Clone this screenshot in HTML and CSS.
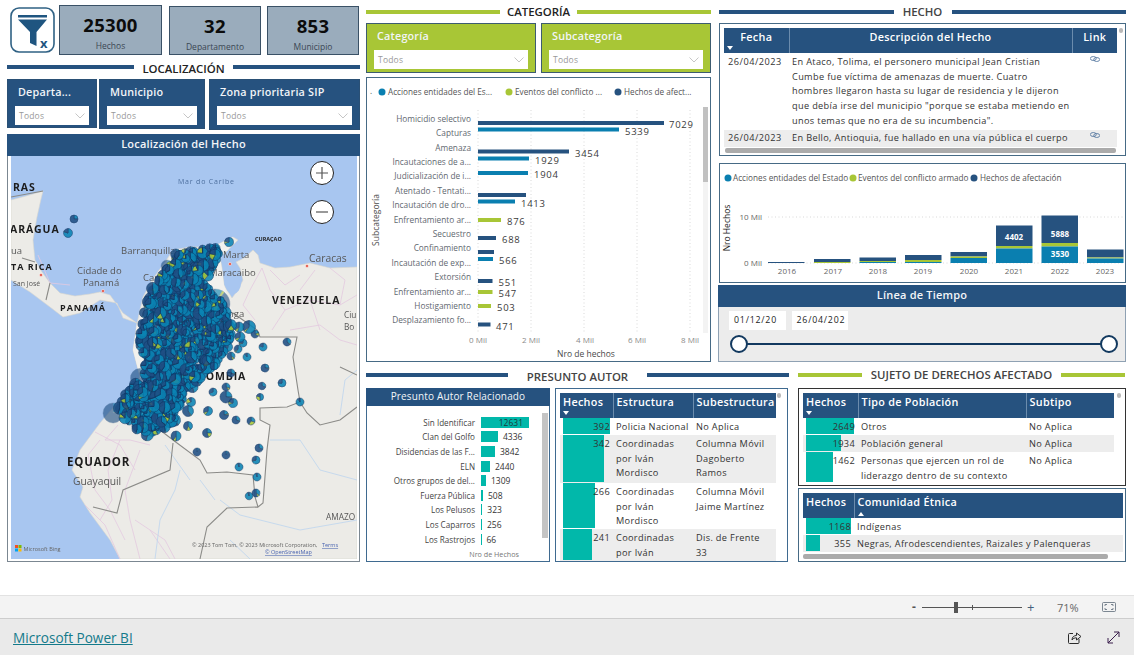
FILE: index.html
```html
<!DOCTYPE html>
<html lang="es">
<head>
<meta charset="utf-8">
<title>Microsoft Power BI</title>
<link rel="stylesheet" href="styles.css">
</head>
<body>
<main class="canvas">
  <section class="col-left">
    <div class="kpis">
      <svg class="clear-filter" viewBox="0 0 45 46" aria-label="Borrar filtros">
        <rect x="1" y="1" width="43" height="44" rx="8" class="cf-frame"/>
        <rect x="8" y="8" width="29" height="2.5" class="cf-fill"/>
        <path d="M8 12.5H37L26.5 25V39L20 36V25Z" class="cf-fill"/>
        <text x="30" y="41" class="cf-x">x</text>
      </svg>
      <div class="kpi kpi-a"><strong>25300</strong><span>Hechos</span></div>
      <div class="kpi kpi-b"><strong>32</strong><span>Departamento</span></div>
      <div class="kpi kpi-c"><strong>853</strong><span>Municipio</span></div>
    </div>
    <div class="section-title title-loc"><i class="bar"></i><h2>LOCALIZACIÓN</h2><i class="bar"></i></div>
    <div class="slicers slicers-loc">
      <div class="slicer s-dep"><h3>Departa...</h3><div class="drop"><span>Todos</span><svg viewBox="0 0 10 6"><path d="M.5.5 5 5 9.500.5"/></svg></div></div>
      <div class="slicer s-mun"><h3>Municipio</h3><div class="drop"><span>Todos</span><svg viewBox="0 0 10 6"><path d="M.5.5 5 5 9.500.5"/></svg></div></div>
      <div class="slicer s-zona"><h3>Zona prioritaria SIP</h3><div class="drop"><span>Todos</span><svg viewBox="0 0 10 6"><path d="M.5.5 5 5 9.500.5"/></svg></div></div>
    </div>
    <div class="map-panel">
      <div class="blue-head">Localización del Hecho</div>
      <svg class="map" id="map" viewBox="11 156 346 403">
        <rect x="11" y="156" width="346" height="403" class="sea"/>
        <path class="land" d="M11 200 26 196 43 191 41 199 37 217 33 240 35 260 42 272 50 283 60 293 75 296 90 294 100 292 110 295 123 313 137 323 143 297 152 280 165 262 173 250 190 247 213 247 226 240 233 237 238 240 228 250 220 257 222 268 224 285 232 298 238 290 243 280 240 268 236 262 244 258 253 250 258 255 260 263 275 268 290 267 310 263 330 268 357 267V559H120L110 540 90 513 80 497 83 487 72 470 80 450 100 423 117 403 140 377 133 350 137 323 123 318 117 303 100 300 80 313 63 317 50 307 30 292 11 280Z"/>
        <ellipse cx="233" cy="283" rx="8" ry="11" class="sea"/>
        <path class="colombia" d="M137 323 173 250 213 247 233 237 228 250 220 257 224 285 233 313 257 330 260 337 297 337 293 357 298 390 300 402 287 407 260 408 260 420 270 425 267 450 263 503 258 507 255 497 253 475 227 472 207 473 200 460 173 440 160 430 140 377 133 350Z"/>
        <g class="roads">
          <path d="M272 330 285 310 310 300 340 305 357 295M300 290 315 270M290 330 320 325 340 340 357 345M310 300 320 330M285 310 270 290 262 268M340 305 345 280 330 268"/>
          <path d="M120 440 108 470 112 500 100 520M140 450 125 490 130 520 140 559M95 432 120 445 135 470M150 530 170 559M38 255 50 283 70 285M100 440 88 455 95 490 110 510 125 540M118 425 105 440 130 440 150 445M85 505 105 525 120 559M135 520 165 540 175 559"/>
          <path d="M262 268 250 290 243 305 255 320M270 270 285 285 300 275"/>
        </g>
        <g class="rivers">
          <path d="M180 470 175 490 160 520 155 559M270 440 300 440 320 470 357 480M220 500 240 515 300 530 357 520M200 480 215 500M340 415 345 380 357 370M165 445 190 480M230 540 250 559"/>
        </g>
        <path class="border" d="M233 313 257 330 260 337 297 337 293 357 298 390 300 402 287 407 260 408 260 420 270 425 267 450 263 503 258 507 255 497 253 475 227 472 207 473 200 460 173 440 160 430M173 443 170 470 123 490 117 513 93 507M258 507 227 508 207 527 200 559M300 402 307 413 320 425 340 420 357 407M340 367 357 375M50 283 46 300M11 197 43 191M22 258 35 262"/>
        <circle cx="41" cy="275" r="1.500" class="city"/>
        <circle cx="103" cy="291" r="1.500" class="city"/>
        <circle cx="307" cy="266" r="1.500" class="city"/>
        <circle cx="230" cy="264" r="1.500" class="city"/>
        <text x="13" y="191" class="lb-c">RAS</text>
        <text x="10" y="233" class="lb-c">ARÁGUA</text>
        <text x="11" y="254" class="lb-m">ua</text>
        <text x="11" y="270" class="lb-b">TA RICA</text>
        <text x="13" y="286" class="lb-s">San José</text>
        <text x="178" y="184" class="lb-sea">Mar do Caribe</text>
        <text x="121" y="254" class="lb-m">Barranquilla</text>
        <text x="77" y="274" class="lb-m">Cidade do</text>
        <text x="83" y="286" class="lb-m">Panamá</text>
        <text x="60" y="311" class="lb-b">PANAMÁ</text>
        <text x="143" y="281" class="lb-m">Cart</text>
        <text x="223" y="258" class="lb-m">Marta</text>
        <text x="209" y="276" class="lb-m">Maracaibo</text>
        <text x="309" y="262" class="lb-l">Caracas</text>
        <text x="255" y="241" class="lb-t">CURAÇAO</text>
        <text x="272" y="304" class="lb-c">VENEZUELA</text>
        <text x="344" y="318" class="lb-a">Ciu</text>
        <text x="344" y="330" class="lb-a">Bo</text>
        <text x="228" y="317" class="lb-m">nga</text>
        <text x="182" y="380" class="lb-c">COLOMBIA</text>
        <text x="67" y="466" class="lb-e">EQUADOR</text>
        <text x="73" y="485" class="lb-l">Guayaquil</text>
        <text x="326" y="520" class="lb-a">AMAZO</text>
        <text x="192" y="547" class="lb-cp">© 2023 Tom Tom, © 2023 Microsoft Corporation,</text>
        <text x="322" y="547" class="lb-lk">Terms</text>
        <text x="265" y="554" class="lb-lk">© OpenStreetMap</text>
        <g>
          <rect x="15" y="545" width="3" height="3" class="ms1"/><rect x="18.500" y="545" width="3" height="3" class="ms2"/>
          <rect x="15" y="548.500" width="3" height="3" class="ms3"/><rect x="18.500" y="548.500" width="3" height="3" class="ms4"/>
        </g>
        <text x="23.500" y="551" class="lb-cp">Microsoft Bing</text>
        <g id="bubbles"></g>
        <circle cx="322" cy="173" r="11.500" class="zoom-btn"/>
        <path d="M316 173H328M322 167V179" class="zoom-glyph"/>
        <circle cx="322" cy="212" r="11.500" class="zoom-btn"/>
        <path d="M316 212H328" class="zoom-glyph"/>
      </svg>
    </div>
  </section>

  <section class="col-main">
    <div class="top-row">
      <div class="col-cat">
        <div class="section-title green title-cat"><i class="bar"></i><h2>CATEGORÍA</h2><i class="bar"></i></div>
        <div class="slicers slicers-cat">
          <div class="slicer green-s"><h3>Categoría</h3><div class="drop"><span>Todos</span><svg viewBox="0 0 10 6"><path d="M.5.5 5 5 9.500.5"/></svg></div></div>
          <div class="slicer green-s"><h3>Subcategoría</h3><div class="drop"><span>Todos</span><svg viewBox="0 0 10 6"><path d="M.5.5 5 5 9.500.5"/></svg></div></div>
        </div>
        <div class="panel chart-panel">
          <svg class="bar-chart" viewBox="367 78 343 283">
            <rect x="703" y="107" width="5" height="226" class="track"/>
            <rect x="703" y="107" width="5" height="75" class="thumb"/>
            <g class="legend">
              <text x="370" y="94">.</text>
              <circle cx="382" cy="92" r="3.500" class="c-blue"/><text x="388" y="95">Acciones entidades del Es...</text>
              <circle cx="509" cy="92" r="3.500" class="c-green"/><text x="515" y="95">Eventos del conflicto ...</text>
              <circle cx="618" cy="92" r="3.500" class="c-dark"/><text x="624" y="95">Hechos de afect...</text>
            </g>
            <g class="grid"><path d="M478 110V333M531 110V333M584 110V333M637 110V333M690 110V333"/></g>
            <g class="cat-labels">
              <text x="471" y="122">Homicidio selectivo</text><text x="471" y="136">Capturas</text>
              <text x="471" y="151">Amenaza</text><text x="471" y="165">Incautaciones de a...</text>
              <text x="471" y="179">Judicialización de i...</text><text x="471" y="194">Atentado - Tentati...</text>
              <text x="471" y="208">Incautación de dro...</text><text x="471" y="223">Enfrentamiento ar...</text>
              <text x="471" y="237">Secuestro</text><text x="471" y="251">Confinamiento</text>
              <text x="471" y="266">Incautación de exp...</text><text x="471" y="280">Extorsión</text>
              <text x="471" y="295">Enfrentamiento ar...</text><text x="471" y="309">Hostigamiento</text>
              <text x="471" y="323">Desplazamiento fo...</text>
            </g>
            <g>
              <rect x="478" y="121" width="186" height="4" class="c-dark"/><rect x="478" y="127.500" width="141" height="4" class="c-blue"/>
              <rect x="478" y="149.500" width="91" height="4" class="c-dark"/><rect x="478" y="156.500" width="51" height="4" class="c-blue"/>
              <rect x="478" y="171" width="50" height="4" class="c-blue"/><rect x="478" y="193" width="48" height="4" class="c-dark"/>
              <rect x="478" y="199.500" width="37" height="4" class="c-blue"/><rect x="478" y="218" width="23" height="4" class="c-green"/>
              <rect x="478" y="236" width="18" height="4" class="c-dark"/><rect x="478" y="250" width="16" height="4" class="c-dark"/>
              <rect x="478" y="257" width="15" height="4" class="c-blue"/><rect x="478" y="279" width="14.500" height="4" class="c-dark"/>
              <rect x="478" y="290" width="14.500" height="4" class="c-green"/><rect x="478" y="304" width="13" height="4" class="c-green"/>
              <rect x="478" y="322.500" width="12.500" height="4" class="c-dark"/>
            </g>
            <g class="vals">
              <text x="669" y="128">7029</text><text x="625" y="135">5339</text><text x="575" y="157">3454</text>
              <text x="535" y="164">1929</text><text x="534" y="178">1904</text><text x="521" y="207">1413</text>
              <text x="507" y="225">876</text><text x="502" y="243">688</text><text x="499" y="264">566</text>
              <text x="498.500" y="286">551</text><text x="498.500" y="297">547</text><text x="497" y="311">503</text>
              <text x="496" y="330">471</text>
            </g>
            <g class="axis">
              <text x="478" y="343">0 Mil</text><text x="531" y="343">2 Mil</text><text x="585" y="343">4 Mil</text>
              <text x="637" y="343">6 Mil</text><text x="690" y="343">8 Mil</text>
            </g>
            <text x="586" y="357" class="ax-title">Nro de hechos</text>
            <text transform="translate(379 220) rotate(-90)" class="ax-title">Subcategoría</text>
          </svg>
        </div>
      </div>

      <div class="col-hecho">
        <div class="section-title title-hecho"><i class="bar"></i><h2>HECHO</h2><i class="bar"></i></div>
        <div class="panel hecho-panel">
          <table class="tbl t-hecho">
            <thead><tr><th class="center">Fecha<i class="sort"></i></th><th class="center">Descripción del Hecho</th><th class="center">Link</th></tr></thead>
            <tbody>
              <tr class="h77"><td>26/04/2023</td><td>En Ataco, Tolima, el personero municipal Jean Cristian<br>Cumbe fue víctima de amenazas de muerte. Cuatro<br>hombres llegaron hasta su lugar de residencia y le dijeron<br>que debía irse del municipio "porque se estaba metiendo en<br>unos temas que no era de su incumbencia".</td><td class="center"><svg class="chain" viewBox="0 0 10 6"><ellipse cx="3.300" cy="2.500" rx="3" ry="2"/><ellipse cx="6.700" cy="3.500" rx="3" ry="2"/></svg></td></tr>
              <tr class="h17 alt"><td>26/04/2023</td><td>En Bello, Antioquia, fue hallado en una vía pública el cuerpo</td><td class="center"><svg class="chain" viewBox="0 0 10 6"><ellipse cx="3.300" cy="2.500" rx="3" ry="2"/><ellipse cx="6.700" cy="3.500" rx="3" ry="2"/></svg></td></tr>
            </tbody>
          </table>
          <i class="v-thumb"></i>
          <i class="h-scroll hs-hecho"></i>
        </div>
        <div class="panel col-chart-panel">
          <svg class="col-chart" viewBox="720 164 405 118">
            <g class="legend">
              <circle cx="728" cy="178" r="3.500" class="c-blue"/><text x="733" y="181">Acciones entidades del Estado</text>
              <circle cx="853" cy="178" r="3.500" class="c-green"/><text x="858" y="181">Eventos del conflicto armado</text>
              <circle cx="974" cy="178" r="3.500" class="c-dark"/><text x="980" y="181">Hechos de afectación</text>
            </g>
            <g class="grid"><path d="M768 217H1125M768 263H1125"/></g>
            <g class="axis end"><text x="762" y="220">10 Mil</text><text x="762" y="266">0 Mil</text></g>
            <text transform="translate(730 228) rotate(-90)" class="ax-title ax-dark">Nro Hechos</text>
            <g>
              <rect x="768" y="262" width="36.500" height="1" class="c-dark"/>
              <rect x="814" y="259" width="36.500" height="3" class="c-dark"/><rect x="814" y="262" width="36.500" height="1" class="c-green"/>
              <rect x="859.500" y="257.500" width="36.500" height="3.500" class="c-dark"/><rect x="859.500" y="261" width="36.500" height="1" class="c-green"/><rect x="859.500" y="262" width="36.500" height="1" class="c-blue"/>
              <rect x="905" y="255" width="36.500" height="5" class="c-dark"/><rect x="905" y="260" width="36.500" height="2" class="c-green"/><rect x="905" y="262" width="36.500" height="1" class="c-blue"/>
              <rect x="950.500" y="252" width="36.500" height="4.500" class="c-dark"/><rect x="950.500" y="256.500" width="36.500" height="1.500" class="c-green"/><rect x="950.500" y="258" width="36.500" height="5" class="c-blue"/>
              <rect x="996" y="225.500" width="36.500" height="20.500" class="c-dark"/><rect x="996" y="246" width="36.500" height="2.500" class="c-green"/><rect x="996" y="248.500" width="36.500" height="14.500" class="c-blue"/>
              <rect x="1041.500" y="215.500" width="36.500" height="27.500" class="c-dark"/><rect x="1041.500" y="243" width="36.500" height="3.500" class="c-green"/><rect x="1041.500" y="246.500" width="36.500" height="16.500" class="c-blue"/>
              <rect x="1087" y="249.500" width="36.500" height="8" class="c-dark"/><rect x="1087" y="257.500" width="36.500" height="1" class="c-green"/><rect x="1087" y="258.500" width="36.500" height="4.500" class="c-blue"/>
            </g>
            <g class="col-vals"><text x="1014" y="240">4402</text><text x="1060" y="237">5888</text><text x="1060" y="257">3530</text></g>
            <g class="axis">
              <text x="787" y="274">2016</text><text x="833" y="274">2017</text><text x="878" y="274">2018</text><text x="923" y="274">2019</text>
              <text x="969" y="274">2020</text><text x="1014" y="274">2021</text><text x="1060" y="274">2022</text><text x="1105" y="274">2023</text>
            </g>
          </svg>
        </div>
        <div class="timeline">
          <div class="blue-head tl-head">Línea de Tiempo</div>
          <div class="tl-body">
            <div class="dates"><span class="date">01/12/20</span><span class="date">26/04/202</span></div>
            <div class="track-line"><i class="knob"></i><i class="knob"></i></div>
          </div>
        </div>
      </div>
    </div>

    <div class="bottom-row">
      <div class="col-autor">
        <div class="section-title title-autor"><i class="bar"></i><h2>PRESUNTO AUTOR</h2><i class="bar"></i></div>
        <div class="autor-panels">
          <div class="panel autor-chart">
            <div class="blue-head autor-head">Presunto Autor Relacionado</div>
            <div class="autor-rows">
              <div class="arow"><span class="alabel">Sin Identificar</span><span class="abar" style="width:48px"><b class="inside">12631</b></span></div>
              <div class="arow"><span class="alabel">Clan del Golfo</span><span class="abar" style="width:17px"></span><b>4336</b></div>
              <div class="arow"><span class="alabel">Disidencias de las F...</span><span class="abar" style="width:14px"></span><b>3842</b></div>
              <div class="arow"><span class="alabel">ELN</span><span class="abar" style="width:9px"></span><b>2440</b></div>
              <div class="arow"><span class="alabel">Otros grupos de del...</span><span class="abar" style="width:5px"></span><b>1309</b></div>
              <div class="arow"><span class="alabel">Fuerza Pública</span><span class="abar" style="width:2px"></span><b>508</b></div>
              <div class="arow"><span class="alabel">Los Pelusos</span><span class="abar" style="width:1.300px"></span><b>323</b></div>
              <div class="arow"><span class="alabel">Los Caparros</span><span class="abar" style="width:1px"></span><b>256</b></div>
              <div class="arow"><span class="alabel">Los Rastrojos</span><span class="abar" style="width:.5px"></span><b>66</b></div>
            </div>
            <div class="autor-axis">Nro de Hechos</div>
            <i class="a-scroll"></i>
          </div>
          <div class="panel autor-table">
            <table class="tbl t-autor">
              <thead><tr><th>Hechos<i class="sort"></i></th><th>Estructura</th><th>Subestructura</th></tr></thead>
              <tbody>
                <tr class="h17"><td class="num"><i class="dbar" style="width:47px"></i><b>392</b></td><td>Policia Nacional</td><td>No Aplica</td></tr>
                <tr class="h48 alt"><td class="num"><i class="dbar" style="width:41px"></i><b>342</b></td><td>Coordinadas<br>por Iván<br>Mordisco</td><td>Columna Móvil<br>Dagoberto<br>Ramos</td></tr>
                <tr class="h46"><td class="num"><i class="dbar" style="width:32px"></i><b>266</b></td><td>Coordinadas<br>por Iván<br>Mordisco</td><td>Columna Móvil<br>Jaime Martínez</td></tr>
                <tr class="h30 alt"><td class="num"><i class="dbar" style="width:29px"></i><b>241</b></td><td>Coordinadas<br>por Iván</td><td>Dis. de Frente<br>33</td></tr>
              </tbody>
            </table>
            <i class="v-thumb"></i>
          </div>
        </div>
      </div>
      <div class="col-sujeto">
        <div class="section-title green title-sujeto"><i class="bar"></i><h2>SUJETO DE DERECHOS AFECTADO</h2><i class="bar"></i></div>
        <div class="panel sujeto1">
          <table class="tbl t-suj1">
            <thead><tr><th>Hechos<i class="sort"></i></th><th>Tipo de Población</th><th>Subtipo</th></tr></thead>
            <tbody>
              <tr class="h17"><td class="num"><i class="dbar" style="width:48px"></i><b>2649</b></td><td>Otros</td><td>No Aplica</td></tr>
              <tr class="h17 alt"><td class="num"><i class="dbar" style="width:35px"></i><b>1934</b></td><td>Población general</td><td>No Aplica</td></tr>
              <tr class="h30"><td class="num"><i class="dbar" style="width:27px"></i><b>1462</b></td><td>Personas que ejercen un rol de<br>liderazgo dentro de su contexto</td><td>No Aplica</td></tr>
            </tbody>
          </table>
          <i class="v-thumb"></i>
        </div>
        <div class="panel sujeto2">
          <table class="tbl t-suj2">
            <thead><tr><th>Hechos</th><th>Comunidad Étnica<i class="sort up"></i></th></tr></thead>
            <tbody>
              <tr class="h17"><td class="num"><i class="dbar" style="width:45px"></i><b>1168</b></td><td>Indígenas</td></tr>
              <tr class="h17 alt"><td class="num"><i class="dbar" style="width:14px"></i><b>355</b></td><td>Negras, Afrodescendientes, Raizales y Palenqueras</td></tr>
            </tbody>
          </table>
          <i class="h-scroll hs-suj"></i>
        </div>
      </div>
    </div>
  </section>
</main>

<div class="zoombar">
  <span class="zb-minus">-</span>
  <div class="zb-slider"><i class="zb-thumb"></i><i class="zb-tick"></i></div>
  <span class="zb-plus">+</span>
  <span class="zb-pct">71%</span>
  <svg class="zb-fit" viewBox="0 0 14 10"><rect x=".5" y=".5" width="13" height="9" rx="1"/><path d="M3 4V2.500H5M9 2.500H11V4M11 6V7.500H9M5 7.500H3V6"/></svg>
</div>
<footer class="footer">
  <a class="pbi-link" href="#">Microsoft Power BI</a>
  <svg class="f-icon share" viewBox="0 0 14 13"><path d="M5 2.500H1.500Q.5 2.500.5 3.500V11.500Q.5 12.500 1.500 12.500H10Q11 12.500 11 11.500V8"/><path d="M4 9C4 6 6 4.500 8.500 4.500V2L13 5.500 8.500 9V6.800C6.500 6.800 5 7.500 4 9Z"/></svg>
  <svg class="f-icon expand" viewBox="0 0 13 13"><path d="M1 12 12 1M7 1H12V6M1 7V12H6"/></svg>
</footer>
<script src="script.js"></script>
</body>
</html>
```
FILE: styles.css
```css
* { box-sizing: border-box; }
html, body { margin: 0; padding: 0; }
body {
  width: 1134px; height: 655px; overflow: hidden; background: #fff;
  display: flex; flex-direction: column;
  font-family: "Open Sans", "Noto Sans", sans-serif; color: #333;
}
i { display: block; font-style: normal; }
h2, h3 { margin: 0; font-weight: 400; }

.canvas { height: 595px; display: flex; gap: 6px; padding-left: 7px; flex: none; }
.col-left { width: 353px; flex: none; }
.col-main { width: 760px; flex: none; display: flex; flex-direction: column; }

/* KPIs */
.kpis { display: flex; align-items: flex-start; height: 56px; padding-top: 5px; }
.clear-filter { width: 45px; height: 46px; margin: 2px 4px 0 3px; flex: none; }
.cf-frame { fill: #fff; stroke: #2f6184; stroke-width: 1.6; }
.cf-fill { fill: #1f5580; }
.cf-x { font: 700 13px "Open Sans", sans-serif; fill: #1f5580; }
.kpi {
  background: #9aacbc; border: 1px solid #3a5166; height: 50px;
  display: flex; flex-direction: column; align-items: center; text-align: center;
}
.kpi strong { font-size: 18.500px; line-height: 22px; margin-top: 8px; font-weight: 700; color: #0c0c0c; letter-spacing: .3px; }
.kpi span { font-size: 8.500px; line-height: 12px; margin-top: 4px; color: #3b4754; }
.kpi-a { width: 103px; }
.kpi-b { width: 92px; margin: 1px 6px 0 7px; height: 49px; }
.kpi-c { width: 92px; margin-top: 1px; height: 49px; }

/* Section titles */
.section-title { display: flex; align-items: center; gap: 0; }
.section-title h2 { font-size: 11.400px; line-height: 14px; color: #222; text-align: center; font-weight: 600; white-space: nowrap; }
.section-title .bar { height: 4px; background: #26527f; flex: 1 1 0; }
.section-title.green .bar { background: #a8c636; }
.title-loc { height: 23px; padding-bottom: 2px; }
.title-loc h2 { width: 99px; padding-top: 5px; }
.title-cat { height: 23px; }
.title-cat .bar:first-child { margin-top: 1px; }
.title-cat h2 { width: 77px; }
.title-hecho { height: 23px; }
.title-hecho h2 { width: 58px; color: #444; }
.title-autor { height: 21px; padding-bottom: 6px; }
.title-autor h2 { width: 139px; color: #444; padding-top: 4px; }
.title-sujeto { height: 21px; padding: 0 1px 6px 0; }
.title-sujeto h2 { width: 199px; color: #444; }

/* Slicers */
.slicers { display: flex; }
.slicers-loc { gap: 2px; height: 55px; align-items: flex-start; }
.slicers-cat { gap: 5px; height: 54px; }
.slicer {
  background: #26527f; border: 1px solid #2a5075; padding: 0 7px;
  display: flex; flex-direction: column; color: #fff;
}
.slicer h3 { font-size: 10.800px; line-height: 14px; font-weight: 600; margin: 5px 3px 7px; color: #f2f5f8; letter-spacing: .2px; white-space: nowrap; }
.drop {
  height: 19px; background: #fff; display: flex; align-items: center; justify-content: space-between;
  padding: 0 4px 0 4px; font-size: 8.500px; color: #999; letter-spacing: .2px;
}
.drop svg { width: 10px; height: 6px; fill: none; stroke: #b8b8b8; stroke-width: .8; }
.s-dep { width: 90px; height: 49px; }
.s-mun { width: 106px; height: 50px; margin-right: 2px; }
.s-zona { width: 151px; height: 51px; }
.green-s { width: 170px; height: 50px; background: #a8c636; border-color: #3d5c70; }

/* Map */
.map-panel { height: 428px; border: 1px solid #7b8791; border-top: 0; padding: 0; }
.blue-head { background: #26527f; color: #f2f5f8; text-align: center; font-size: 11px; font-weight: 600; letter-spacing: .2px; }
.map-panel .blue-head { height: 22px; line-height: 19px; margin: 0 -1px; }
.map { display: block; width: 346px; height: 403px; margin-left: 3px; filter: blur(.25px); }
.sea { fill: #a8c6f0; }
.land { fill: #ecebe7; stroke: #d9d6cf; stroke-width: .6; }
.colombia { fill: #f2f1ee; }
.roads path { fill: none; stroke: #e3c9e0; stroke-width: .8; }
.rivers path { fill: none; stroke: #bdd4ef; stroke-width: .8; }
.border { fill: none; stroke: #8b8b88; stroke-width: 1.100; }
.city { fill: #e34a3c; stroke: #fff; stroke-width: .5; }
.map text { font-family: "Open Sans", sans-serif; }
.lb-c { font-size: 10.500px; font-weight: 700; fill: #1d1d1d; letter-spacing: .9px; }
.lb-b { font-size: 9px; font-weight: 700; fill: #1d1d1d; letter-spacing: 1px; }
.lb-e { font-size: 11.500px; font-weight: 700; fill: #1d1d1d; letter-spacing: .8px; }
.lb-m { font-size: 9.500px; fill: #575757; }
.lb-a { font-size: 8.300px; fill: #575757; }
.lb-l { font-size: 10.300px; fill: #575757; }
.lb-s { font-size: 7px; fill: #555; }
.lb-t { font-size: 5.500px; font-weight: 700; fill: #222; }
.lb-sea { font-size: 7px; fill: #4d6f9e; letter-spacing: .8px; }
.lb-cp { font-size: 5.500px; fill: #666; }
.lb-lk { font-size: 5.500px; fill: #4a64b0; text-decoration: underline; }
.ms1 { fill: #f25022; } .ms2 { fill: #7fba00; } .ms3 { fill: #00a4ef; } .ms4 { fill: #ffb900; }
.zoom-btn { fill: #fff; stroke: #222; stroke-width: 1; }
.zoom-glyph { fill: none; stroke: #555; stroke-width: 1.200; }
.p-blue { fill: #0a84b4; }
.p-dark { fill: #1f4f84; }
.p-green { fill: #a8c636; }
.bub { stroke: #0c3160; stroke-width: .55; opacity: .88; }
.bub-pale { opacity: .62; stroke: #3a5f8a; stroke-width: .4; }

/* Panels */
.panel { border: 1px solid #466a85; background: #fff; }
.chart-panel { height: 285px; }
.bar-chart { display: block; width: 343px; height: 283px; }
.c-blue { fill: #0a7fb0; } .c-green { fill: #a8c636; } .c-dark { fill: #26527f; }
.legend text { font-size: 8.200px; fill: #555; }
.grid path { fill: none; stroke: #cfcfcf; stroke-width: .8; stroke-dasharray: 1 2.500; }
.track { fill: #f3f3f3; } .thumb { fill: #c1c1c1; }
.cat-labels text { font-size: 8.300px; fill: #5f6870; text-anchor: end; }
.vals text { font-size: 9.500px; fill: #3a3a3a; letter-spacing: .7px; }
.axis text { font-size: 8px; fill: #8a8a8a; text-anchor: middle; }
.col-chart .axis text { fill: #666; }
.axis.end text { text-anchor: end; }
.ax-title { font-size: 8.500px; fill: #4a4a4a; text-anchor: middle; }
.ax-dark { fill: #222; }
.col-vals text { font-size: 8px; font-weight: 700; fill: #fff; text-anchor: middle; }

.top-row { display: flex; gap: 8px; height: 367px; flex: none; }
.col-cat { width: 345px; flex: none; }
.col-hecho { width: 407px; flex: none; }

/* Tables */
.tbl { border-collapse: collapse; table-layout: fixed; font-size: 9.200px; line-height: 14.700px; color: #333; letter-spacing: .34px; }
.tbl th {
  background: #26527f; color: #fff; font-weight: 600; font-size: 10.800px; height: 25px; padding: 0 3px;
  text-align: left; vertical-align: top; line-height: 18px; border-right: 1px solid #6b8cad; position: relative; letter-spacing: .3px; overflow: hidden;
}
.tbl th:last-child { border-right: 0; }
.tbl th.center { text-align: center; }
.tbl td { padding: 2px 3px 0; vertical-align: top; white-space: nowrap; overflow: hidden; }
.tbl td.center { text-align: center; }
.sort { width: 0; height: 0; border: 3.500px solid transparent; border-top: 4px solid #fff; border-bottom: 0; margin: 0; }
.sort.up { border-top: 0; border-bottom: 4px solid #fff; margin-top: 1px; }
.alt td { background: #ededed; }
.h17 td { height: 17px; } .h77 td { height: 77px; } .h48 td { height: 48px; } .h46 td { height: 46px; } .h30 td { height: 30px; }
.num { position: relative; text-align: right; }
.num b { font-weight: 400; position: relative; }
.dbar { position: absolute; left: 3px; top: 0; bottom: 1px; background: #01b8aa; }
.chain { width: 10px; height: 6px; fill: none; stroke: #4a6e99; stroke-width: .8; vertical-align: 3px; }
.v-thumb { position: absolute; width: 3.500px; height: 5px; background: #b9b9b9; border-radius: 2px; }
.h-scroll { height: 4.500px; background: #ababab; border-radius: 2px; position: absolute; }

.hecho-panel { position: relative; height: 133px; padding: 4px 0 0 4px; }
.t-hecho { width: 393px; }
.t-hecho th:nth-child(1) { width: 65px; } .t-hecho th:nth-child(2) { width: 283px; }
.t-hecho th:nth-child(3) { width: 45px; }
.t-hecho td:first-child { padding-left: 4px; letter-spacing: .5px; }
.t-hecho tr.h17 td { padding-top: 1px; }
.hecho-panel .v-thumb { left: 399px; top: 4px; }
.hs-hecho { left: 5px; width: 391px; top: 124px; }

.col-chart-panel { height: 120px; margin-top: 7px; }
.col-chart { display: block; width: 405px; height: 118px; }

.timeline { margin: 2px 0 0 -1px; width: 408px; height: 77px; background: #ececec; border: 1px solid #8fa1b3; border-top: 0; }
.tl-head { height: 22px; line-height: 19px; margin: 0 -1px; }
.tl-body { padding: 4px 10px 0; }
.dates { display: flex; gap: 6px; }
.date { display: block; width: 56.500px; height: 19px; background: #fff; font-size: 8.800px; line-height: 19px; padding-left: 5px; letter-spacing: .8px; overflow: hidden; white-space: nowrap; color: #222; }
.track-line { height: 2px; background: #12395f; margin: 13px 6px 0 10px; display: flex; justify-content: space-between; align-items: center; }
.knob { width: 18px; height: 18px; border-radius: 50%; background: #fff; border: 2px solid #12395f; margin: 0 -9px; flex: none; }

.bottom-row { display: flex; gap: 9px; }
.col-autor { width: 423px; flex: none; }
.col-sujeto { width: 328px; flex: none; }
.autor-panels { display: flex; gap: 5px; }
.autor-chart { width: 184px; height: 174px; position: relative; border-color: #3f6a90; }
.autor-head { height: 18px; line-height: 17px; margin: -1px -1px 0; font-size: 10px; font-weight: 500; letter-spacing: .15px; }
.autor-rows { padding-top: 9px; }
.arow { height: 14.600px; display: flex; align-items: center; font-size: 8.100px; color: #444; }
.alabel { width: 108px; text-align: right; flex: none; margin-right: 6px; white-space: nowrap; }
.abar { height: 11px; background: #01b8aa; display: block; flex: none; position: relative; }
.arow b { font-weight: 400; margin-left: 5px; color: #333; font-size: 8.500px; }
.abar .inside { position: absolute; right: 6px; top: -1px; margin: 0; line-height: 13px; color: #1c3a3a; }
.autor-axis { font-size: 7.200px; color: #777; text-align: right; padding: 3px 30px 0 0; line-height: 10px; }
.a-scroll { position: absolute; left: 175px; top: 24px; width: 6px; height: 125px; background: #c4c4c4; }

.autor-table { width: 233px; height: 174px; position: relative; padding: 4px 0 0 4px; overflow: hidden; border-color: #3f6a90; }
.t-autor { width: 216px; }
.t-autor th:nth-child(1) { width: 53px; } .t-autor th:nth-child(2) { width: 80px; } .t-autor th:nth-child(3) { width: 83px; }
.autor-table .v-thumb { left: 221px; top: 4px; }
.tbl .num { padding-right: 3px; }

.sujeto1 { height: 98px; position: relative; padding: 4px 0 0 4px; border-color: #333; margin-bottom: 2px; overflow: hidden; }
.t-suj1 { width: 311px; }
.t-suj1 th:nth-child(1) { width: 55px; } .t-suj1 th:nth-child(2) { width: 168px; } .t-suj1 th:nth-child(3) { width: 88px; }
.sujeto1 .v-thumb { left: 318px; top: 4px; }
.sujeto2 { height: 74px; position: relative; padding: 4px 0 0 4px; overflow: hidden; }
.t-suj2 { width: 320px; }
.t-suj2 th:nth-child(1) { width: 51px; } .t-suj2 th:nth-child(2) { width: 269px; }
.hs-suj { left: 4px; width: 305px; top: 65px; }

/* Zoom bar */
.zoombar { height: 23px; flex: none; background: #f3f3f3; border-top: 1px solid #e2e2e2; position: relative; display: flex; align-items: center; padding-left: 912px; color: #555; }
.zb-minus { width: 10px; font-size: 12px; font-weight: 700; line-height: 20px; }
.zb-slider { width: 100px; height: 1px; background: #555; position: relative; flex: none; }
.zb-thumb { position: absolute; left: 32px; top: -5px; width: 4px; height: 11px; background: #555; }
.zb-tick { position: absolute; left: 50px; top: -2px; width: 1px; height: 5px; background: #555; }
.zb-plus { margin-left: 5px; width: 14px; font-size: 13px; color: #44607a; }
.zb-pct { margin-left: 16px; width: 45px; font-size: 11px; color: #666; }
.zb-fit { width: 14px; height: 10px; fill: none; stroke: #5d6b78; stroke-width: .8; flex: none; }

/* Footer */
.footer { flex: 1; background: #eaeaea; border-top: 1px solid #cdcdcd; display: flex; align-items: center; padding: 1px 14px 0 13px; }
.pbi-link { font-size: 13.600px; color: #147a8a; text-decoration: underline; font-family: "Open Sans", sans-serif; }
.f-icon { fill: none; stroke: #2a2a2a; stroke-width: 1; flex: none; }
.share { width: 14px; height: 13px; margin-left: auto; }
.expand { width: 13px; height: 13px; margin-left: 25px; stroke: #3a1f4d; }
```
FILE: script.js
```js
(function () {
  var NS = "http://www.w3.org/2000/svg";
  var host = document.getElementById("bubbles");
  var seed = 20230426;
  function rnd() { seed = (seed * 1664525 + 1013904223) % 4294967296; return seed / 4294967296; }

  function slice(g, x, y, r, a0, a1, cls) {
    var large = a1 - a0 > Math.PI ? 1 : 0;
    var p = document.createElementNS(NS, "path");
    p.setAttribute("d", "M" + x + " " + y + "L" + (x + r * Math.cos(a0)).toFixed(2) + " " + (y + r * Math.sin(a0)).toFixed(2) +
      "A" + r + " " + r + " 0 " + large + " 1 " + (x + r * Math.cos(a1)).toFixed(2) + " " + (y + r * Math.sin(a1)).toFixed(2) + "Z");
    p.setAttribute("class", cls);
    g.appendChild(p);
  }

  function pie(x, y, r, blue, green, pale) {
    var g = document.createElementNS(NS, "g");
    g.setAttribute("class", "bub" + (pale ? " bub-pale" : ""));
    var start = -Math.PI / 2, tau = Math.PI * 2;
    var a1 = start + blue * tau, a2 = a1 + green * tau;
    if (blue > 0) slice(g, x, y, r, start, a1 - 0.0001, "p-blue");
    if (green > 0) slice(g, x, y, r, a1, a2, "p-green");
    slice(g, x, y, r, a2, start + tau - 0.0001, "p-dark");
    host.appendChild(g);
  }

  // dense cluster outline, page coordinates
  var poly = [[176,252],[222,247],[205,285],[222,300],[228,320],[232,340],[226,352],[208,370],[195,385],[185,392],[176,420],[160,432],[148,437],[130,425],[118,410],[122,396],[142,378],[146,360],[140,345],[142,320],[150,290],[165,272]];
  function inside(px, py) {
    var c = false;
    for (var i = 0, j = poly.length - 1; i < poly.length; j = i++) {
      var a = poly[i], b = poly[j];
      if ((a[1] > py) !== (b[1] > py) && px < (b[0] - a[0]) * (py - a[1]) / (b[1] - a[1]) + a[0]) c = !c;
    }
    return c;
  }

  pie(215, 304, 15, .08, .03, true);
  pie(140, 378, 9.500, .15, .02, true);
  pie(113, 413, 10, .2, .04, true);
  pie(167, 266, 6, .5, 0, true);
  pie(178, 259, 6, .55, 0, true);
  pie(196, 258, 6, .5, .05, true);

  var n = 0;
  while (n < 1000) {
    var x = 118 + rnd() * 116, y = 246 + rnd() * 194;
    if (!inside(x, y)) continue;
    var r = 3 + rnd() * 3.200;
    var b = .35 + rnd() * .45, gr = rnd() < .22 ? .1 + rnd() * .2 : .01;
    pie(+x.toFixed(1), +y.toFixed(1), +r.toFixed(1), b, gr, false);
    n++;
  }

  var loose = [
    [74,219,4,.25,0],[68,233,4.500,.8,.02],[229,242,4.500,.7,.08],
    [255,334,4,.2,.15],[263,347,4,.8,0],[287,342,4,.35,.03],[247,357,4,.9,0],[265,368,4,.25,.04],
    [262,386,3.800,.3,0],[282,383,4,.75,.02],[260,397,3.600,.5,.3],[300,402,4,.9,0],[226,387,4,.3,.1],
    [226,397,6,.25,.03],[233,403,4.500,.7,.1],[213,392,4,.7,0],[191,402,4.500,.7,.2],[188,411,5.500,.4,.03],
    [208,411,4.500,.6,.1],[224,415,4.500,.2,.05],[236,420,4,.3,.02],[251,421,4,.3,.3],[188,426,4.500,.4,.15],
    [207,433,4.500,.25,.2],[176,436,5,.5,.1],[197,452,4,.1,0],[226,455,4,.1,0],[259,448,4,.3,0],
    [256,460,4,.7,.03],[239,467,4,.95,0],[257,477,4,.95,0],[256,493,4,.35,.1],[249,496,3.800,.95,0],
    [231,356,4,.35,.1],[238,349,4,.6,.05],[243,343,4,.7,.05],[240,337,5,.6,.1],[249,327,6.500,.6,.05],
    [239,327,5,.55,.1],[231,325,5.500,.4,.2],[231,373,4,.3,.03],[214,366,4,.5,0]
  ];
  loose.forEach(function (p) { pie(p[0], p[1], p[2], p[3], p[4], false); });
})();
```
